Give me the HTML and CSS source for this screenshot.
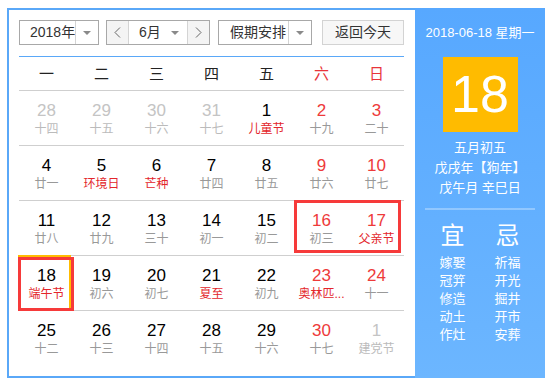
FILE: index.html
```html
<!DOCTYPE html>
<html lang="zh-CN">
<head>
<meta charset="utf-8">
<title>日历</title>
<link rel="stylesheet" href="styles.css">
</head>
<body>
<div class="cal">
  <div class="main">
    <div class="toolbar">
      <div class="sel sel-year"><span class="sel-label">2018年</span><span class="sel-arrow"><i class="tri"></i></span></div>
      <div class="sel sel-month">
        <span class="nav-btn"><svg width="7" height="11" viewBox="0 0 7 11"><polyline points="6,0.5 1,5.5 6,10.5" fill="none" stroke="#666" stroke-width="1"/></svg></span>
        <span class="sel-label month-label">6月<i class="tri"></i></span>
        <span class="nav-btn nav-next"><svg width="7" height="11" viewBox="0 0 7 11"><polyline points="1,0.5 6,5.5 1,10.5" fill="none" stroke="#666" stroke-width="1"/></svg></span>
      </div>
      <div class="sel sel-hol"><span class="sel-label hol-label">假期安排</span><span class="sel-arrow"><i class="tri"></i></span></div>
      <div class="btn-today">返回今天</div>
    </div>
    <div class="weekhead">
      <span>一</span><span>二</span><span>三</span><span>四</span><span>五</span><span class="red">六</span><span class="red">日</span>
    </div>
    <div class="weeks">
      <div class="week">
        <div class="cell other"><div class="num">28</div><div class="lunar">十四</div></div>
        <div class="cell other"><div class="num">29</div><div class="lunar">十五</div></div>
        <div class="cell other"><div class="num">30</div><div class="lunar">十六</div></div>
        <div class="cell other"><div class="num">31</div><div class="lunar">十七</div></div>
        <div class="cell"><div class="num">1</div><div class="lunar fest">儿童节</div></div>
        <div class="cell we"><div class="num">2</div><div class="lunar">十九</div></div>
        <div class="cell we"><div class="num">3</div><div class="lunar">二十</div></div>
      </div>
      <div class="week">
        <div class="cell"><div class="num">4</div><div class="lunar">廿一</div></div>
        <div class="cell"><div class="num">5</div><div class="lunar fest">环境日</div></div>
        <div class="cell"><div class="num">6</div><div class="lunar fest">芒种</div></div>
        <div class="cell"><div class="num">7</div><div class="lunar">廿四</div></div>
        <div class="cell"><div class="num">8</div><div class="lunar">廿五</div></div>
        <div class="cell we"><div class="num">9</div><div class="lunar">廿六</div></div>
        <div class="cell we"><div class="num">10</div><div class="lunar">廿七</div></div>
      </div>
      <div class="week">
        <div class="cell"><div class="num">11</div><div class="lunar">廿八</div></div>
        <div class="cell"><div class="num">12</div><div class="lunar">廿九</div></div>
        <div class="cell"><div class="num">13</div><div class="lunar">三十</div></div>
        <div class="cell"><div class="num">14</div><div class="lunar">初一</div></div>
        <div class="cell"><div class="num">15</div><div class="lunar">初二</div></div>
        <div class="cell we"><div class="num">16</div><div class="lunar">初三</div><div class="mark mark-wide"></div></div>
        <div class="cell we"><div class="num">17</div><div class="lunar fest">父亲节</div></div>
      </div>
      <div class="week">
        <div class="cell today"><div class="num">18</div><div class="lunar fest">端午节</div><div class="today-box"></div><div class="mark mark-one"></div></div>
        <div class="cell"><div class="num">19</div><div class="lunar">初六</div></div>
        <div class="cell"><div class="num">20</div><div class="lunar">初七</div></div>
        <div class="cell"><div class="num">21</div><div class="lunar fest">夏至</div></div>
        <div class="cell"><div class="num">22</div><div class="lunar">初九</div></div>
        <div class="cell we"><div class="num">23</div><div class="lunar fest">奥林匹...</div></div>
        <div class="cell we"><div class="num">24</div><div class="lunar">十一</div></div>
      </div>
      <div class="week">
        <div class="cell"><div class="num">25</div><div class="lunar">十二</div></div>
        <div class="cell"><div class="num">26</div><div class="lunar">十三</div></div>
        <div class="cell"><div class="num">27</div><div class="lunar">十四</div></div>
        <div class="cell"><div class="num">28</div><div class="lunar">十五</div></div>
        <div class="cell"><div class="num">29</div><div class="lunar">十六</div></div>
        <div class="cell we"><div class="num">30</div><div class="lunar">十七</div></div>
        <div class="cell other"><div class="num">1</div><div class="lunar">建党节</div></div>
      </div>
    </div>
  </div>
  <div class="side">
    <div class="side-date">2018-06-18 星期一</div>
    <div class="big-day">18</div>
    <div class="lunar-info">
      <div>五月初五</div>
      <div>戊戌年【狗年】</div>
      <div>戊午月 辛巳日</div>
    </div>
    <div class="sep"></div>
    <div class="yiji">
      <div class="yj-col">
        <div class="yj-title">宜</div>
        <div class="yj-item">嫁娶</div>
        <div class="yj-item">冠笄</div>
        <div class="yj-item">修造</div>
        <div class="yj-item">动土</div>
        <div class="yj-item">作灶</div>
      </div>
      <div class="yj-col">
        <div class="yj-title">忌</div>
        <div class="yj-item">祈福</div>
        <div class="yj-item">开光</div>
        <div class="yj-item">掘井</div>
        <div class="yj-item">开市</div>
        <div class="yj-item">安葬</div>
      </div>
    </div>
  </div>
</div>
</body>
</html>
```

FILE: styles.css
```css
* { box-sizing: border-box; }
html, body { margin: 0; padding: 0; background: #fff; }
body {
  font-family: "Liberation Sans", "Noto Sans CJK SC", sans-serif;
  color: #333;
}
.cal {
  margin: 8px 0 0 7px;
  width: 538px;
  height: 370px;
  border: 2px solid #5aa8f8;
  display: flex;
}
.main {
  width: 406px;
  padding: 10px 11px 10px 10px;
}
.toolbar {
  display: flex;
  height: 25px;
  font-size: 14px;
  line-height: 23px;
  white-space: nowrap;
}
.sel {
  display: flex;
  border: 1px solid #a8a8a8;
  background: #fff;
  height: 25px;
}
.sel-year { width: 80px; margin-right: 7px; }
.sel-month { width: 104px; margin-right: 8px; }
.sel-hol { width: 94px; margin-right: 10px; }
.sel-label { flex: 1; padding-left: 10px; white-space: nowrap; }
.hol-label { padding-left: 11px; }
.sel-arrow {
  width: 23px;
  flex: none;
  border-left: 1px solid #d4d4d4;
  display: flex;
  align-items: center;
  justify-content: center;
}
.tri {
  display: inline-block;
  flex: none;
  width: 0;
  height: 0;
  border-left: 4px solid transparent;
  border-right: 4px solid transparent;
  border-top: 4px solid #8a8a8a;
}
.nav-btn {
  width: 22px;
  flex: none;
  background: #f4f4f4;
  border-right: 1px solid #d4d4d4;
  display: flex;
  align-items: center;
  justify-content: center;
}
.nav-next { border-right: 0; border-left: 1px solid #d4d4d4; }
.month-label {
  display: flex;
  align-items: center;
  padding-left: 10px;
}
.month-label .tri { margin-left: 10px; }
.btn-today {
  width: 82px;
  height: 25px;
  border: 1px solid #d3d3d3;
  background: #f7f7f7;
  text-align: center;
}
.weekhead {
  margin-top: 11px;
  border-top: 1px solid #5aa8f8;
  display: grid;
  grid-template-columns: repeat(7, 55px);
  height: 34px;
  line-height: 33px;
  font-size: 15px;
  text-align: center;
  color: #222;
}
.red { color: #e8353a; }
.week {
  display: grid;
  grid-template-columns: repeat(7, 55px);
  height: 55px;
  border-top: 1px solid #cfcfcf;
}
.cell {
  position: relative;
  text-align: center;
  padding-top: 10px;
}
.num {
  font-size: 17px;
  line-height: 20px;
  color: #000;
}
.lunar {
  font-size: 12px;
  line-height: 16px;
  color: #999;
  white-space: nowrap;
}
.we .num { color: #ee3a3a; }
.fest { color: #e3262b; }
.other .num { color: #c4c4c4; }
.other .lunar { color: #bbb; }
.today-box {
  position: absolute;
  left: -1px;
  top: -1px;
  width: 53px;
  height: 55px;
  border: 2px solid #ffbb00;
}
.mark {
  position: absolute;
  border: 3px solid #f63a3a;
}
.mark-wide {
  left: 0;
  top: -1px;
  width: 107px;
  height: 53px;
}
.mark-one {
  left: -1px;
  top: 1px;
  width: 56px;
  height: 54px;
}
.side {
  width: 130px;
  margin: -2px -2px -2px 0;
  background: linear-gradient(#57a8ff, #6cb6ff);
  color: #fff;
  text-align: center;
  padding-top: 17px;
}
.side-date {
  font-size: 13px;
  line-height: 16px;
}
.big-day {
  width: 75px;
  height: 75px;
  margin: 16px auto 0;
  background: #ffbb00;
  font-size: 52px;
  line-height: 75px;
}
.lunar-info {
  margin-top: 6px;
  font-size: 13px;
  line-height: 20px;
}
.sep {
  width: 110px;
  height: 2px;
  margin: 10px auto 0;
  background: rgba(255, 255, 255, 0.3);
}
.yiji {
  display: flex;
  justify-content: center;
  margin-top: 12px;
}
.yj-col { width: 55px; }
.yj-title {
  font-size: 24px;
  line-height: 28px;
  margin-bottom: 4px;
}
.yj-item {
  font-size: 13px;
  line-height: 18px;
}
```
